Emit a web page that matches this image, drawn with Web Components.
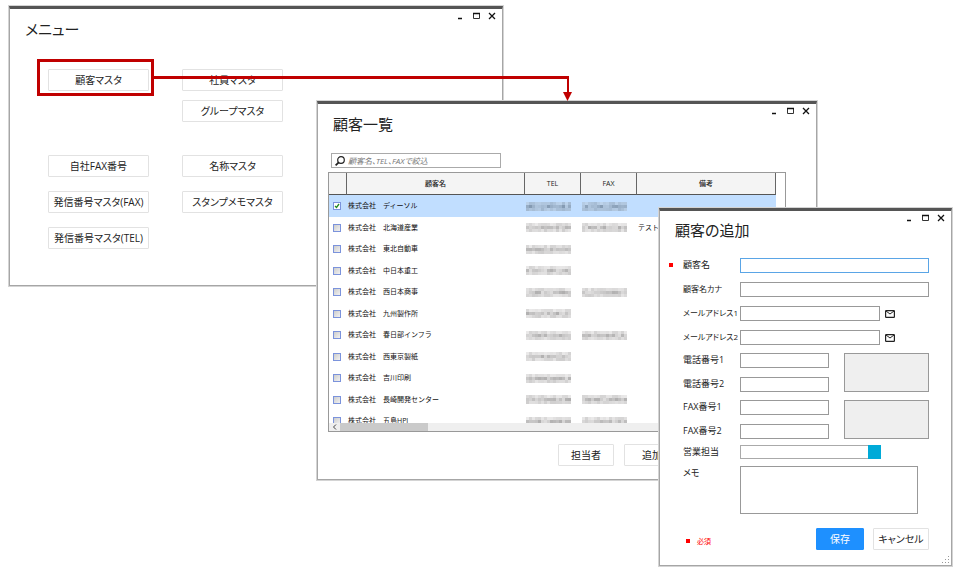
<!DOCTYPE html>
<html lang="ja">
<head>
<meta charset="utf-8">
<meta name="viewport" content="width=device-width, initial-scale=1">
<title>顧客マスタ</title>
<style>
html,body{margin:0;background:#fff}
body{font-family:"Open Sans","Noto Sans CJK JP",sans-serif;font-size:9px;color:#222}
</style>
</head>
<body>
<app-desktop>
  <app-window slot="menu" heading="メニュー"><master-menu></master-menu></app-window>
  <app-window slot="list" heading="顧客一覧"><customer-list></customer-list></app-window>
  <app-window slot="form" heading="顧客の追加" resizable compact><customer-form></customer-form></app-window>
</app-desktop>
<script>
const define = (name, html, setup) => customElements.define(name, class extends HTMLElement {
  connectedCallback() {
    if (this.shadowRoot) return;
    const root = this.attachShadow({ mode: 'open' });
    root.innerHTML = html(this);
    if (setup) setup(root, this);
  }
});

define('app-desktop', () => `
<style>
:host{display:grid;min-height:100vh;
  grid-template-columns:9fr 28fr 117fr 163fr 186fr 66fr 90fr 158fr 135fr 8fr;
  grid-template-rows:6px 53px 17px 25px 107px auto}
.mark,.line{min-width:0}
::slotted(*){align-self:start;min-width:0}
::slotted([slot=menu]){grid-area:2/2/7/6}
::slotted([slot=list]){grid-area:5/5/7/9}
::slotted([slot=form]){grid-area:6/8/7/10}
.mark{grid-column:3/4;grid-row:3/5;height:31px;border:3px solid #c00000;z-index:2;pointer-events:none}
.line{grid-column:4/7;grid-row:4/5;position:relative;border:solid #c00000;border-width:3px 2px 0 0;margin-bottom:6px;z-index:2;pointer-events:none}
.line svg{position:absolute;right:-5px;top:13px;display:block}
</style>
<slot name="menu"></slot><slot name="list"></slot><slot name="form"></slot>
<div class="mark"></div>
<div class="line"><svg width="9" height="9" viewBox="0 0 9 9"><path d="M0 0h9L4.5 9z" fill="#c00000"/></svg></div>`);

define('window-controls', () => `
<style>
:host{display:flex;gap:8px}
button{all:unset;display:block;width:8px;height:8px}
svg{display:block}
</style>
<button aria-label="最小化"><svg width="8" height="8"><path d="M2 6.5h4" stroke="#111" stroke-width="1.5"/></svg></button>
<button aria-label="最大化"><svg width="8" height="8"><path d="M1.5 1.5h6v5h-6z" fill="none" stroke="#333"/><path d="M1 1.5h7" stroke="#111" stroke-width="1.5"/></svg></button>
<button aria-label="閉じる"><svg width="8" height="8"><path d="M1 1l6 6M7 1L1 7" stroke="#111" stroke-width="1.3"/></svg></button>`);

define('app-window', el => `
<style>
:host{display:block;position:relative;box-sizing:border-box;background:#fff;border:1px solid #a6a6a6;border-top:3px solid #555;box-shadow:0 0 0 1px #d4d4d4}
header{display:flex;justify-content:space-between;align-items:flex-start;padding:3px 6px 0 15px}
h1{margin:5px 0 0;font-size:15px;line-height:24px;font-weight:400;font-feature-settings:"palt";color:#222;white-space:nowrap}
:host([compact]) h1{margin-top:4px}
.grip{position:absolute;right:1px;bottom:1px;display:block}
</style>
<header><h1>${el.getAttribute('heading')}</h1><window-controls></window-controls></header>
<slot></slot>
${el.hasAttribute('resizable') ? `<svg class="grip" width="8" height="8" fill="#999"><path d="M6 0h1v1H6zM3 3h1v1H3zM6 3h1v1H6zM0 6h1v1H0zM3 6h1v1H3zM6 6h1v1H6z"/></svg>` : ''}`);

define('ui-button', el => `
<style>
:host{display:block}
button{box-sizing:border-box;width:100%;height:22px;padding:0;border:1px solid #e2e2e2;border-radius:1px;background:#fff;color:#222;font:inherit;font-size:10px;line-height:16px;font-feature-settings:"palt";white-space:nowrap}
:host([primary]) button{background:#1e90ff;border-color:#1e90ff;color:#fff}
</style><button type="button"><slot></slot></button>`);

define('master-menu', () => `
<style>
:host{display:block;padding:28px 38px 36px}
.g{display:grid;grid-template-columns:101px 101px;column-gap:33px;row-gap:9px}
.g+.g{margin-top:33px;row-gap:14px}
.r{grid-column:2}
</style>
<div class="g"><ui-button>顧客マスタ</ui-button><ui-button>社員マスタ</ui-button><ui-button class="r">グループマスタ</ui-button></div>
<div class="g"><ui-button>自社FAX番号</ui-button><ui-button>名称マスタ</ui-button><ui-button>発信番号マスタ(FAX)</ui-button><ui-button>スタンプメモマスタ</ui-button><ui-button>発信番号マスタ(TEL)</ui-button></div>`);

/* Pixelated placeholder for a phone number: pale edges, darker middle rows. */
define('masked-number', () => `
<style>
:host{display:grid;grid-template-columns:repeat(15,3px);grid-auto-rows:3px;width:45px;overflow:hidden}
</style>`, (root, el) => {
  let s = Number(el.getAttribute('seed')) * 7919 + 13;
  const dark = el.hasAttribute('selected');
  for (let i = 0; i < 45; i++) {
    s = (s * 1103515 + 12345) % 2147483648;
    const v = (s >> 12) % 48, row = Math.floor(i / 15);
    const g = [212, 176, 206][row] + (row === 1 ? v : v >> 1);
    const d = document.createElement('i');
    d.style.background = dark ? `rgb(${g - 46},${g - 24},${g})` : `rgb(${g},${g - 1},${g - 1})`;
    root.append(d);
  }
});

const customers = [
  ['ディーソル', 1, ''], ['北海道産業', 1, 'テスト'], ['東北自動車', 0, ''], ['中日本重工', 0, ''],
  ['西日本商事', 1, ''], ['九州製作所', 0, ''], ['春日部インフラ', 1, ''], ['西東京製紙', 0, ''],
  ['吉川印刷', 0, ''], ['長崎開発センター', 1, ''], ['五島HPI', 1, '']
];

define('customer-list', () => `
<style>
:host{display:block;padding:17px 30px 13px 10px}
.search{box-sizing:border-box;display:flex;align-items:center;gap:3px;width:170px;height:15px;margin-left:3px;padding-left:3px;border:1px solid #aaa}
.search svg{flex:none}
.search input{flex:1;min-width:0;border:0;outline:0;padding:0;background:none;font:inherit;font-size:8px;font-feature-settings:"palt";line-height:13px;height:13px;color:#333}
.search input::placeholder{color:#777;font-style:italic;opacity:1}
.frame{margin-top:4px;border:1px solid #999}
.view{height:250px;overflow:hidden}
table{border-collapse:separate;border-spacing:0;table-layout:fixed;width:calc(100% - 9px);font-size:7px;line-height:12px}
th{box-sizing:border-box;height:22px;padding:0;font-weight:500;background:#f4f4f4;border-right:1px solid #666;border-bottom:1px solid #555;color:#222}
td{box-sizing:border-box;height:21px;padding:0 1px;white-space:nowrap;color:#111}
tr:nth-child(odd) td{height:22px}
tr.sel td{background:#c1deff}
td:first-child{padding-left:4px}
input[type=checkbox]{appearance:none;display:block;box-sizing:border-box;width:8px;height:8px;margin:0;border:1px solid #7b93dc;background:linear-gradient(135deg,#ccc,#f2f2f2)}
input:checked{background:#fff url("data:image/svg+xml,%3Csvg xmlns='http://www.w3.org/2000/svg' viewBox='0 0 6 6'%3E%3Cpath d='M1 3l1.5 1.5L5 1' fill='none' stroke='%23228822' stroke-width='1.3'/%3E%3C/svg%3E")}
.bar{display:flex;height:8px;background:#efefef}
.bar svg{flex:none;margin:0 1px 0 2px}
.bar i{width:88px;background:#cacaca}
.actions{display:flex;gap:10px;margin:12px 0 0 230px}
.actions ui-button{width:56px}
</style>
<div class="search"><svg width="10" height="10" viewBox="0 0 10 10" fill="none" stroke="#222"><circle cx="6" cy="4" r="3.3" stroke-width="1.2"/><path d="M3.7 6.3L.6 9.3" stroke-width="1.8"/></svg><input type="search" aria-label="絞込" placeholder="顧客名、TEL、FAXで絞込"></div>
<div class="frame"><div class="view"><table>
<colgroup><col style="width:18px"><col style="width:178px"><col style="width:56px"><col style="width:56px"><col></colgroup>
<thead><tr><th></th><th>顧客名</th><th>TEL</th><th>FAX</th><th>備考</th></tr></thead>
<tbody>${customers.map(([n, f, note], i) => `<tr${i ? '' : ' class="sel"'}><td><input type="checkbox" aria-label="${n}"${i ? '' : ' checked'}></td><td>株式会社　${n}</td><td><masked-number seed="${i * 2 + 1}"${i ? '' : ' selected'}></masked-number></td><td>${f ? `<masked-number seed="${i * 2 + 2}"${i ? '' : ' selected'}></masked-number>` : ''}</td><td>${note}</td></tr>`).join('')}</tbody>
</table></div>
<div class="bar"><svg width="8" height="8"><path d="M5 1.5L2.5 4 5 6.5" fill="none" stroke="#444"/></svg><i></i></div></div>
<div class="actions"><ui-button>担当者</ui-button><ui-button>追加</ui-button></div>`);

define('customer-form', () => {
  const row = (id, label, cls = '', extra = '') => `<label for="${id}" class="${cls}">${label}</label><div class="f"><input id="${id}" type="text">${extra}</div>`;
  const mail = `<button class="mail" type="button" aria-label="メール"><svg width="10" height="8" viewBox="0 0 10 8" fill="none" stroke="#222"><rect x=".6" y=".6" width="8.8" height="6.8" rx=".6" stroke-width="1.2"/><path d="M1 1l4 3 4-3"/></svg></button>`;
  return `
<style>
:host{display:block;padding:16px 22px 15px 9px}
.grid{display:grid;grid-template-columns:14px 57px minmax(0,1fr);row-gap:9px;align-items:start}
.pair{grid-template-columns:14px 57px minmax(0,1fr) 85px;margin-top:8px}
.last{margin-top:6px;row-gap:7px}
label{grid-column:2;font-size:9px;line-height:13px;font-feature-settings:"palt";white-space:nowrap;color:#222}
label.kana{font-size:8px}
.dot{width:4px;height:4px;background:#f00;margin-top:5px}
.f{grid-column:3;display:flex;gap:5px;height:15px}
input,textarea{box-sizing:border-box;display:block;width:100%;min-width:0;height:15px;margin:0;padding:0 2px;border:1px solid #999;border-radius:0;background:#fff;font:inherit;resize:none;outline:0}
#name{border-color:#5aa5e6}
.mail{all:unset;flex:none;width:10px;margin-right:34px;display:flex;align-items:center}
.box{grid-column:4;grid-row:1/3;align-self:stretch;background:#efefef;border:1px solid #999}
.pair .f{margin-right:15px}
.combo{display:flex;gap:0;height:14px;margin-right:48px;border:1px solid #aaa;box-sizing:border-box}
.combo input{border:0;height:12px}
.combo button{all:unset;flex:none;width:13px;margin:-1px;background:#00aad8}
textarea{height:48px;width:calc(100% - 11px)}
.foot{display:flex;align-items:center;gap:9px;margin-top:14px;font-size:7px;color:#f00}
.foot .dot{margin:4px -2px 0 17px}
.foot span{flex:1;padding-top:4px}
.foot ui-button{width:56px}.foot ui-button[primary]{width:48px}
</style>
<form>
<div class="grid">
<span class="dot"></span>${row('name', '顧客名')}
${row('kana', '顧客名カナ', 'kana')}
${row('m1', 'メールアドレス1', 'kana', mail)}
${row('m2', 'メールアドレス2', 'kana', mail)}
</div>
<div class="grid pair">${row('t1', '電話番号1')}${row('t2', '電話番号2')}<div class="box"></div></div>
<div class="grid pair">${row('f1', 'FAX番号1')}${row('f2', 'FAX番号2')}<div class="box"></div></div>
<div class="grid last">
<label for="rep">営業担当</label><div class="f combo"><input id="rep" type="text"><button type="button" aria-label="選択"></button></div>
<label for="memo">メモ</label><textarea id="memo"></textarea>
</div>
<div class="foot"><i class="dot"></i><span>必須</span><ui-button primary>保存</ui-button><ui-button>キャンセル</ui-button></div>
</form>`;
});
</script>
</body>
</html>
